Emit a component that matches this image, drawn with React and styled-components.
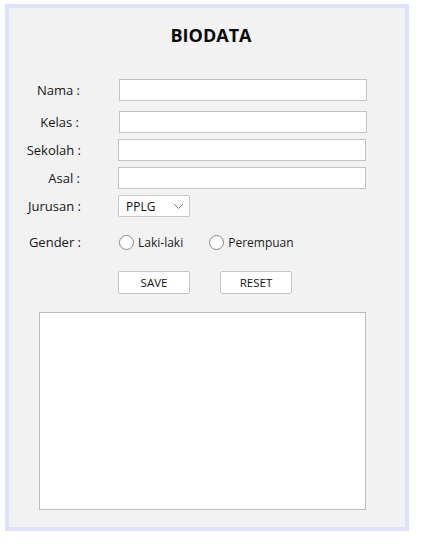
import React, { useState } from 'react';
import styled, { createGlobalStyle } from 'styled-components';

const GlobalStyle = createGlobalStyle`
  body {
    margin: 0;
    background: #ffffff;
    font-family: "Open Sans", "Noto Sans", sans-serif;
  }
`;

const Frame = styled.div`
  box-sizing: border-box;
  margin: 4px 0 0 5px;
  width: 404px;
  height: 527px;
  border: 4px solid #dfe0fb;
  background: #f2f2f2;
  display: flex;
  flex-direction: column;
`;

const Title = styled.h1`
  margin: 0;
  padding: 17px 0 0 8px;
  height: 20px;
  line-height: 20px;
  font-size: 18px;
  font-weight: 700;
  text-align: center;
  color: #0a0a0a;
`;

const Form = styled.div`
  display: flex;
  flex-direction: column;
  padding-top: 34px;
`;

const Row = styled.div`
  display: flex;
  align-items: center;
  height: ${(p) => p.h || 22}px;
  margin-top: ${(p) => p.top || 0}px;
`;

const Label = styled.label`
  box-sizing: border-box;
  width: 72px;
  padding-right: ${(p) => p.pr || 0}px;
  text-align: right;
  font-size: 13px;
  color: #151515;
  flex-shrink: 0;
`;

const Field = styled.div`
  margin-left: ${(p) => 37 + (p.shift || 0)}px;
  display: flex;
  align-items: center;
  gap: ${(p) => p.gap || 0}px;
`;

const TextInput = styled.input`
  box-sizing: border-box;
  width: 248px;
  height: 22px;
  border: 1px solid #c3c3c3;
  background: #ffffff;
  font-family: inherit;
  font-size: 12px;
  padding: 0 4px;
  outline: none;
`;

const SelectBox = styled.div`
  box-sizing: border-box;
  width: 72px;
  height: 22px;
  border: 1px solid #c9c9c9;
  border-radius: 2px;
  background: #ffffff;
  display: flex;
  align-items: center;
  justify-content: space-between;
  padding: 0 5px 0 7px;
  font-size: 12px;
  color: #111;
`;

const RadioOption = styled.label`
  display: flex;
  align-items: center;
  gap: 4px;
  font-size: 12px;
  color: #1b1b1b;
  cursor: pointer;
`;

const RadioDot = styled.span`
  box-sizing: border-box;
  width: 15px;
  height: 15px;
  border-radius: 50%;
  border: 1px solid #8a8a8a;
  background: ${(p) => (p.on ? 'radial-gradient(circle, #333 0 3px, #fff 3.5px)' : '#ffffff')};
`;

const Buttons = styled.div`
  display: flex;
  gap: 30px;
  margin: 18px 0 0 109px;
`;

const Button = styled.button`
  box-sizing: border-box;
  width: 72px;
  height: 23px;
  border: 1px solid #c6c6c6;
  border-radius: 2px;
  background: #ffffff;
  font-family: inherit;
  font-size: 11.5px;
  color: #111;
  padding: 0;
`;

const Output = styled.textarea`
  box-sizing: border-box;
  display: block;
  margin: 18px 0 0 30px;
  width: 327px;
  height: 198px;
  border: 1px solid #bcbcbc;
  background: #ffffff;
  resize: none;
  outline: none;
`;

function Chevron() {
  return (
    <svg width="11" height="7" viewBox="0 0 11 7">
      <path d="M1 1 L5.5 5.5 L10 1" fill="none" stroke="#7a7a7a" strokeWidth="1" />
    </svg>
  );
}

export default function App() {
  const [gender, setGender] = useState('');

  return (
    <>
      <GlobalStyle />
      <Frame>
        <Title>BIODATA</Title>
        <Form>
          <Row>
            <Label pr={1}>Nama :</Label>
            <Field shift={1}><TextInput /></Field>
          </Row>
          <Row top={10}>
            <Label pr={2}>Kelas :</Label>
            <Field shift={1}><TextInput /></Field>
          </Row>
          <Row top={6}>
            <Label>Sekolah :</Label>
            <Field><TextInput /></Field>
          </Row>
          <Row top={6}>
            <Label pr={1}>Asal :</Label>
            <Field><TextInput /></Field>
          </Row>
          <Row top={6}>
            <Label>Jurusan :</Label>
            <Field>
              <SelectBox>
                PPLG
                <Chevron />
              </SelectBox>
            </Field>
          </Row>
          <Row top={14}>
            <Label>Gender :</Label>
            <Field shift={1} gap={26}>
              <RadioOption onClick={() => setGender('L')}>
                <RadioDot on={gender === 'L'} />
                Laki-laki
              </RadioOption>
              <RadioOption onClick={() => setGender('P')}>
                <RadioDot on={gender === 'P'} />
                Perempuan
              </RadioOption>
            </Field>
          </Row>
        </Form>
        <Buttons>
          <Button>SAVE</Button>
          <Button>RESET</Button>
        </Buttons>
        <Output readOnly />
      </Frame>
    </>
  );
}
